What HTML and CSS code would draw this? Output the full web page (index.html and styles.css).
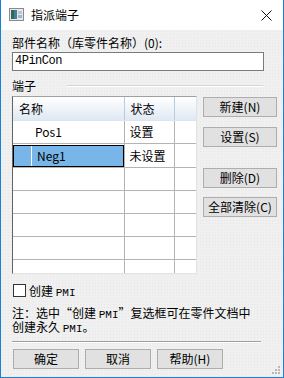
FILE: index.html
```html
<!DOCTYPE html>
<html>
    <head>
        <title>指派端子</title>
        <link rel="stylesheet" href="styles.css">
    </head>
    <body>
        <div class="dialog">
            <div class="titlebar">
                <svg class="app-icon" width="15" height="13" viewBox="0 0 15 13">
                    <rect x="0.5" y="0.5" width="14" height="12" fill="#e8e8e8" stroke="#8a8a8a"/>
                    <rect x="2" y="2" width="6" height="9" fill="#3d7f9c"/>
                    <rect x="2" y="2" width="3" height="9" fill="#2f6b52"/>
                    <rect x="9" y="3" width="4" height="3" fill="#b7c7d4"/>
                    <rect x="9" y="7" width="4" height="3" fill="#9fb4c6"/>
                </svg>
                <span class="title">指派端子</span>
                <svg class="close" width="11" height="11" viewBox="0 0 11 11">
                    <path d="M0.5 0.5 L10.5 10.5 M10.5 0.5 L0.5 10.5" stroke="#111" stroke-width="1"/>
                </svg>
            </div>

            <div class="content">
                <div class="label">部件名称（库零件名称）(0):</div>
                <div class="textbox">4PinCon</div>

                <div class="group-title"><span>端子</span><i></i></div>

                <div class="main">
                    <div class="listview">
                        <table>
                            <tr class="head">
                                <th class="c-name">名称</th>
                                <th class="c-state">状态</th>
                                <th class="c-rest"></th>
                            </tr>
                            <tr>
                                <td class="c-name"><span class="indent">Pos1</span></td>
                                <td>设置</td>
                                <td></td>
                            </tr>
                            <tr class="selected">
                                <td class="c-name"><div class="sel-box"><span class="sel-text">Neg1</span></div></td>
                                <td>未设置</td>
                                <td></td>
                            </tr>
                            <tr><td></td><td></td><td></td></tr>
                            <tr><td></td><td></td><td></td></tr>
                            <tr><td></td><td></td><td></td></tr>
                            <tr><td></td><td></td><td></td></tr>
                            <tr><td></td><td></td><td></td></tr>
                        </table>
                    </div>
                    <div class="side-buttons">
                        <div class="btn">新建(N)</div>
                        <div class="btn gap-s">设置(S)</div>
                        <div class="btn gap-l">删除(D)</div>
                        <div class="btn gap-m">全部清除(C)</div>
                    </div>
                </div>

                <div class="check-row">
                    <span class="checkbox"></span>
                    <span>创建 <span class="mono">PMI</span></span>
                </div>

                <div class="note">
                    <div class="note-line">注：选中“创建 <span class="mono">PMI</span>”复选框可在零件文档中</div>
                    <div class="note-line">创建永久 <span class="mono">PMI</span>。</div>
                </div>

                <div class="separator"></div>

                <div class="bottom-buttons">
                    <div class="btn wide">确定</div>
                    <div class="btn wide">取消</div>
                    <div class="btn wide">帮助(H)</div>
                </div>
            </div>

            <svg class="grip" width="9" height="9" viewBox="0 0 9 9">
                <rect x="6" y="0" width="2" height="2" fill="#b8b8b8"/>
                <rect x="3" y="3" width="2" height="2" fill="#b8b8b8"/>
                <rect x="6" y="3" width="2" height="2" fill="#b8b8b8"/>
                <rect x="0" y="6" width="2" height="2" fill="#b8b8b8"/>
                <rect x="3" y="6" width="2" height="2" fill="#b8b8b8"/>
                <rect x="6" y="6" width="2" height="2" fill="#b8b8b8"/>
            </svg>
        </div>
    </body>
</html>
```

FILE: styles.css
```css
* {
    margin: 0;
    padding: 0;
    box-sizing: border-box;
}

body {
    width: 284px;
    height: 378px;
    font-family: "Noto Sans CJK SC", "Noto Sans", sans-serif;
    font-size: 12px;
    color: #000;
    background: #fff;
}

.dialog {
    position: relative;
    width: 284px;
    height: 378px;
    border-left: 1px solid #1c7fd6;
    border-right: 1px solid #1c7fd6;
    border-bottom: 1px solid #1c7fd6;
    background-color: #f0f0f0;
    background-image: radial-gradient(#e6e6e6 0.6px, transparent 0.7px);
    background-size: 3px 3px;
    display: flex;
    flex-direction: column;
}

.titlebar {
    height: 30px;
    flex-shrink: 0;
    background: #fff;
    display: flex;
    align-items: center;
    padding-left: 8px;
}

.app-icon {
    display: block;
    margin-top: -1px;
}

.title {
    margin-left: 7px;
    line-height: 16px;
    font-size: 12px;
}

.close {
    margin-left: auto;
    margin-right: 11px;
    display: block;
}

.content {
    padding-left: 11px;
    display: flex;
    flex-direction: column;
}

.label {
    margin-top: 5px;
    height: 16px;
    line-height: 16px;
}

.textbox {
    margin-top: 1px;
    width: 252px;
    height: 19px;
    border: 1px solid #7a7a7a;
    background: #fff;
    font-family: "Liberation Mono", monospace;
    font-size: 12px;
    line-height: 17px;
    padding-left: 2px;
    letter-spacing: -0.5px;
}

.group-title {
    margin-top: 7px;
    height: 15px;
    display: flex;
    align-items: center;
    line-height: 15px;
    width: 251px;
}

.group-title i {
    flex: 1;
    margin-left: 31px;
    height: 2px;
    border-top: 1px solid #d5d5d5;
    border-bottom: 1px solid #fff;
}

.main {
    margin-top: 3px;
    display: flex;
    flex-shrink: 0;
}

.listview {
    width: 185px;
    height: 178px;
    overflow: hidden;
    background: #fff;
    border-left: 1px solid #646464;
    border-top: 1px solid #a0a0a0;
    border-right: 1px solid #e3e3e3;
    border-bottom: 1px solid #e3e3e3;
}

table {
    border-collapse: collapse;
    table-layout: fixed;
    width: 184px;
}

th, td {
    height: 23px;
    border-right: 1px solid #b4b4b4;
    border-bottom: 1px solid #b4b4b4;
    font-weight: normal;
    text-align: left;
    padding: 0 0 0 5px;
    white-space: nowrap;
}

th {
    border-bottom: 1px solid #dce4ee;
    border-right: 1px solid #dce4ee;
    background: linear-gradient(#ffffff, #dfe8f3);
    padding-left: 6px;
}

.c-name {
    width: 111px;
}

.c-state {
    width: 50px;
}

.head .c-name,
.head .c-state {
    border-right: 1px solid #b9cbe0;
}

.indent {
    padding-left: 17px;
}

.selected .c-name {
    padding: 0;
}

.sel-box {
    height: 22px;
    margin: 1px 0 0 0;
    border: 1px solid #000;
    background: #78b5e8;
    padding-left: 17px;
    display: flex;
}

.sel-text {
    flex: 1;
    border-left: 1px solid #fff;
    padding-left: 5px;
    line-height: 20px;
}

.side-buttons {
    margin-left: 6px;
    padding-top: 1px;
    display: flex;
    flex-direction: column;
}

.btn {
    width: 74px;
    height: 20px;
    border: 1px solid #adadad;
    background-color: #e1e1e1;
    background-image: radial-gradient(#d6d6d6 0.6px, transparent 0.7px);
    background-size: 2px 2px;
    text-align: center;
    line-height: 18px;
    font-size: 12px;
}

.gap-s {
    margin-top: 10px;
}

.gap-l {
    margin-top: 21px;
}

.gap-m {
    margin-top: 9px;
}

.check-row {
    margin-top: 9px;
    margin-left: 1px;
    height: 15px;
    display: flex;
    align-items: center;
    line-height: 15px;
}

.checkbox {
    width: 13px;
    height: 13px;
    border: 1px solid #333;
    background: #fff;
    margin-right: 3px;
}

.mono {
    font-family: "Liberation Mono", monospace;
    font-size: 11px;
    line-height: 10px;
}

.note {
    margin-top: 8px;
    display: flex;
    flex-direction: column;
}

.note-line {
    height: 14px;
    line-height: 14px;
}

.separator {
    margin-top: 7px;
    width: 249px;
    height: 2px;
    border-top: 1px solid #a0a0a0;
    border-bottom: 1px solid #fff;
}

.bottom-buttons {
    margin-top: 6px;
    margin-left: 1px;
    display: flex;
    gap: 6px;
}

.btn.wide {
    width: 66px;
}

.grip {
    position: absolute;
    right: 2px;
    bottom: 2px;
}
```
